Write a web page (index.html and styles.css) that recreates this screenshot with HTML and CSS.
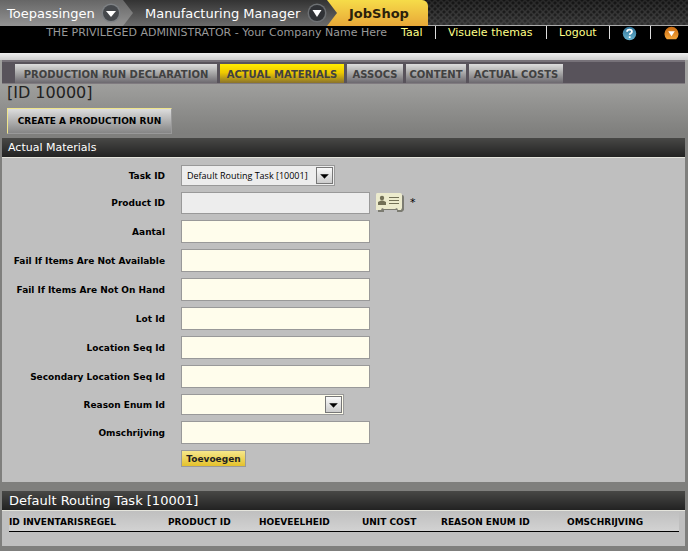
FILE: index.html
```html
<!DOCTYPE html>
<html lang="nl">
<head>
<meta charset="utf-8">
<title>JobShop</title>
<link rel="stylesheet" href="styles.css">
</head>
<body>
<header>
  <nav class="crumbs" aria-label="Toepassingen">
    <a class="crumb apps" href="#">Toepassingen
      <svg class="drop" viewBox="0 0 20 20"><circle cx="10" cy="10" r="9.5" fill="#7d8084"/><circle cx="10" cy="10" r="8" fill="#45484c"/><path d="M5 8h10l-5 6z" fill="#fff"/></svg>
    </a>
    <a class="crumb manager" href="#">Manufacturing Manager
      <svg class="drop" viewBox="0 0 20 20"><circle cx="10" cy="10" r="9.5" fill="#6d7073"/><circle cx="10" cy="10" r="8" fill="#303236"/><path d="M5.500 7h9L10 14z" fill="#fff"/></svg>
    </a>
    <a class="crumb current" href="#">JobShop</a>
  </nav>
  <div class="userbar">
    <span class="user">THE PRIVILEGED ADMINISTRATOR - Your Company Name Here</span>
    <a class="pref lang" href="#">Taal</a>
    <a class="pref themes" href="#">Visuele themas</a>
    <a class="pref logout" href="#">Logout</a>
    <a class="pref help" href="#" aria-label="Help">
      <svg viewBox="0 0 16 16"><defs><linearGradient id="hb" x2="0" y2="1"><stop offset="0" stop-color="#2d6f94"/><stop offset="1" stop-color="#68b4d0"/></linearGradient></defs><circle cx="8" cy="8" r="7.2" fill="url(#hb)"/><path d="M5.4 6.2C5.4 3 10.6 3 10.6 6 10.6 7.7 8.2 7.7 8.2 9.4M8.2 11v1.8" fill="none" stroke="#fff" stroke-width="1.9"/></svg>
    </a>
    <a class="pref collapse" href="#" aria-label="Inklappen">
      <svg viewBox="0 0 16 16"><defs><linearGradient id="ob" x2="0" y2="1"><stop offset="0" stop-color="#c96a10"/><stop offset="1" stop-color="#f5a53a"/></linearGradient></defs><path d="M3 14A7.500 7.500 0 1 1 13 14z" fill="url(#ob)"/><path d="M4.500 5.500h7L8 11z" fill="#fff"/></svg>
    </a>
  </div>
</header>
<main>
  <nav class="tabs" aria-label="JobShop">
    <a href="#">PRODUCTION RUN DECLARATION</a>
    <a class="selected" href="#">ACTUAL MATERIALS</a>
    <a href="#">ASSOCS</a>
    <a href="#">CONTENT</a>
    <a href="#">ACTUAL COSTS</a>
  </nav>
  <h1>[ID 10000]</h1>
  <button class="create" type="button">CREATE A PRODUCTION RUN</button>
  <section class="panel">
    <h2>Actual Materials</h2>
    <form class="fields">
      <label for="task">Task ID</label>
      <div class="cell"><span class="pick task"><select id="task"><option>Default Routing Task [10001]</option></select><svg class="arrow" viewBox="0 0 17 17"><path d="M4 7h9v1h-1v1h-1v1h-1v1H9v1H8v-1H7v-1H6V9H5V8H4z"/></svg></span></div>
      <label for="product">Product ID</label>
      <div class="cell"><input class="readonly" id="product" type="text">
        <button class="lookup" type="button" aria-label="Zoeken"><svg viewBox="0 0 30 20"><path d="M3 2h24q2 0 2 2v13l-2 2h-5v-2H9v2H3z" fill="#7c7c72"/><path d="M2 0h23q2 0 2 2v13l-1 2h-3l-1-2-2 1H9l-2-1-1 2H1V2q0-2 1-2z" fill="#ecebcd"/><circle cx="7" cy="5" r="2.200" fill="#727056"/><path d="M3 12V9l3-1.500h2L11 9v3z" fill="#727056"/><path d="M14 4.500h10M14 7.500h10M14 10.500h10" stroke="#727056"/></svg></button><span class="required">*</span></div>
      <label for="qty">Aantal</label>
      <div class="cell"><input id="qty" type="text"></div>
      <label for="avail">Fail If Items Are Not Available</label>
      <div class="cell"><input id="avail" type="text"></div>
      <label for="hand">Fail If Items Are Not On Hand</label>
      <div class="cell"><input id="hand" type="text"></div>
      <label for="lot">Lot Id</label>
      <div class="cell"><input id="lot" type="text"></div>
      <label for="loc">Location Seq Id</label>
      <div class="cell"><input id="loc" type="text"></div>
      <label for="loc2">Secondary Location Seq Id</label>
      <div class="cell"><input id="loc2" type="text"></div>
      <label for="reason">Reason Enum Id</label>
      <div class="cell"><span class="pick reason"><select id="reason"><option></option></select><svg class="arrow" viewBox="0 0 17 17"><path d="M4 7h9v1h-1v1h-1v1h-1v1H9v1H8v-1H7v-1H6V9H5V8H4z"/></svg></span></div>
      <label for="desc">Omschrijving</label>
      <div class="cell"><input id="desc" type="text"></div>
      <button class="add" type="button">Toevoegen</button>
    </form>
  </section>
  <section class="panel results">
    <h2>Default Routing Task [10001]</h2>
    <div class="tablewrap">
      <table>
        <thead><tr><th class="c1">ID INVENTARISREGEL</th><th class="c2">PRODUCT ID</th><th class="c3">HOEVEELHEID</th><th class="c4">UNIT COST</th><th class="c5">REASON ENUM ID</th><th>OMSCHRIJVING</th></tr></thead>
      </table>
    </div>
  </section>
</main>
</body>
</html>
```
FILE: styles.css
```css
* { box-sizing: border-box; }
body {
  margin: 0;
  background: #81807e;
  color: #000;
  font-family: Verdana, "DejaVu Sans", sans-serif;
  font-size: 10px;
}
a { text-decoration: none; }
svg { display: block; }

.crumbs {
  display: flex;
  height: 26px;
  border-bottom: 1px solid #aaa;
  background-color: #363636;
  background-image:
    linear-gradient(#0004, #0000 50%, #5555),
    radial-gradient(circle, #1c1c1c 1px, #0000 2px),
    radial-gradient(circle, #1c1c1c 1px, #0000 2px);
  background-size: auto, 6px 6px, 6px 6px;
  background-position: 0 0, 0 0, 3px 3px;
}
.crumb {
  display: flex;
  align-items: center;
  justify-content: space-between;
  height: 26px;
  color: #fff;
  font-size: 13px;
  white-space: nowrap;
}
.drop { width: 20px; height: 20px; }
.apps {
  width: 133px;
  padding: 0 12px 0 7px;
  background: linear-gradient(#666, #939393);
  clip-path: polygon(0 0, 123px 0, 100% 50%, 123px 100%, 0 100%);
  z-index: 2;
}
.manager {
  width: 216px;
  margin-left: -12px;
  padding: 0 10px 0 24px;
  background: linear-gradient(#333, #6b6b6b);
  clip-path: polygon(0 0, 206px 0, 100% 50%, 206px 100%, 0 100%);
  z-index: 1;
}
.current {
  width: 104px;
  margin-left: -13px;
  padding-left: 25px;
  border-radius: 0 6px 0 0;
  background: linear-gradient(#f6dc49, #e8a838);
  color: #2b210b;
  font-weight: bold;
}

.userbar {
  display: flex;
  justify-content: flex-end;
  height: 27px;
  background: #000;
  color: #999;
  font-size: 11px;
  line-height: 14px;
  white-space: nowrap;
}
.pref {
  height: 13px;
  color: #ff8;
  border-right: 1px solid #ddd;
}
.lang { width: 35px; margin-left: 14px; }
.themes { width: 111px; padding-left: 12px; }
.logout { width: 63px; padding-left: 12px; }
.help { width: 41px; padding-left: 12px; }
.collapse { width: 37px; padding-left: 13px; border: 0; }
.pref svg { width: 15px; height: 15px; }

main {
  padding: 7px 3px 6px 2px;
  background: linear-gradient(#eee, #ccc 7px, #0000 7px), linear-gradient(#a0a09e 30px, #7f7f7d 80px);
}
.tabs {
  display: grid;
  grid-template-columns: 202px 124px 56px 60px 94px;
  gap: 3px;
  height: 24px;
  padding: 2px 13px 2px;
  border-top: 2px solid #777279;
  border-bottom: 1px solid #807b80;
  background: #58535b;
}
.tabs a {
  height: 19px;
  background: linear-gradient(#ddd, #aaa 45%, #6c696f);
  color: #414141;
  font-size: 10px;
  font-weight: bold;
  line-height: 21px;
  text-align: center;
  white-space: nowrap;
}
.tabs a.selected { background: linear-gradient(#ffec00, #eec900 45%, #8a732b); }

h1 {
  margin: 0 5px;
  color: #222;
  font-size: 16px;
  font-weight: normal;
  line-height: 18px;
}
.create {
  display: block;
  width: 165px;
  height: 26px;
  margin: 6px 5px 4px;
  padding: 0;
  border: 1px solid #999;
  border-top-color: #efe58b;
  border-left-color: #efe58b;
  background: linear-gradient(#ddd, #858585);
  font: bold 9px Verdana, "DejaVu Sans", sans-serif;
}

.panel { background: #bfbfbf; }
h2 {
  margin: 0;
  padding-left: 6px;
  border-bottom: 1px solid #e4e4dc;
  background: linear-gradient(#484846, #222);
  color: #fff;
  font-size: 11px;
  font-weight: normal;
  line-height: 19px;
}
.fields {
  display: grid;
  grid-template-columns: 163px 1fr;
  column-gap: 16px;
  row-gap: 6px;
  align-items: center;
  padding: 7px 0 15px;
}
.fields label {
  font: bold 9px Verdana, "DejaVu Sans", sans-serif;
  text-align: right;
  white-space: nowrap;
}
.cell { display: flex; align-items: center; }
input {
  width: 189px;
  height: 23px;
  padding: 0 4px;
  border: 1px solid #999;
  background: #fffdec;
  font: 9px Verdana, "DejaVu Sans", sans-serif;
}
input.readonly { height: 22px; background: #ededed; }
.lookup { margin: 0 0 0 5px; padding: 0; border: 0; background: none; }
.lookup svg { width: 30px; height: 20px; }
.required { margin-left: 5px; font-size: 11px; line-height: 12px; }
.pick { display: grid; height: 21px; }
.pick select {
  grid-area: 1 / 1;
  width: 100%;
  height: 21px;
  padding: 0 20px 0 5px;
  border: 1px solid #999;
  border-radius: 0;
  appearance: none;
  background: #fffdec;
  color: #000;
  font: 9px "Open Sans", Tahoma, sans-serif;
}
.task { width: 154px; }
.task select { background: #ededed; }
.reason { width: 163px; }
.arrow {
  grid-area: 1 / 1;
  justify-self: end;
  align-self: center;
  width: 17px;
  height: 17px;
  margin-right: 2px;
  border: 1px solid #777;
  background: linear-gradient(#fafafa, #ccc);
  pointer-events: none;
}
.add {
  grid-column: 2;
  justify-self: start;
  width: 65px;
  height: 17px;
  padding: 0;
  border: 1px solid #999;
  background: linear-gradient(#f6e78b, #e4c12b);
  color: #222;
  font: bold 9px Verdana, "DejaVu Sans", sans-serif;
}

.results { margin-top: 9px; }
.results h2 { padding-left: 7px; font-size: 13px; }
.tablewrap { padding: 0 6px 14px 7px; }
table { width: 100%; border-collapse: collapse; table-layout: fixed; }
th {
  height: 20px;
  padding: 5px 0 1px;
  border-bottom: 1px solid #000;
  background: linear-gradient(#bfbfbf, #d2d2d2);
  font-size: 9px;
  line-height: 13px;
  text-align: left;
  white-space: nowrap;
}
.c1 { width: 159px; }
.c2 { width: 91px; }
.c3 { width: 103px; }
.c4 { width: 79px; }
.c5 { width: 126px; }
```
